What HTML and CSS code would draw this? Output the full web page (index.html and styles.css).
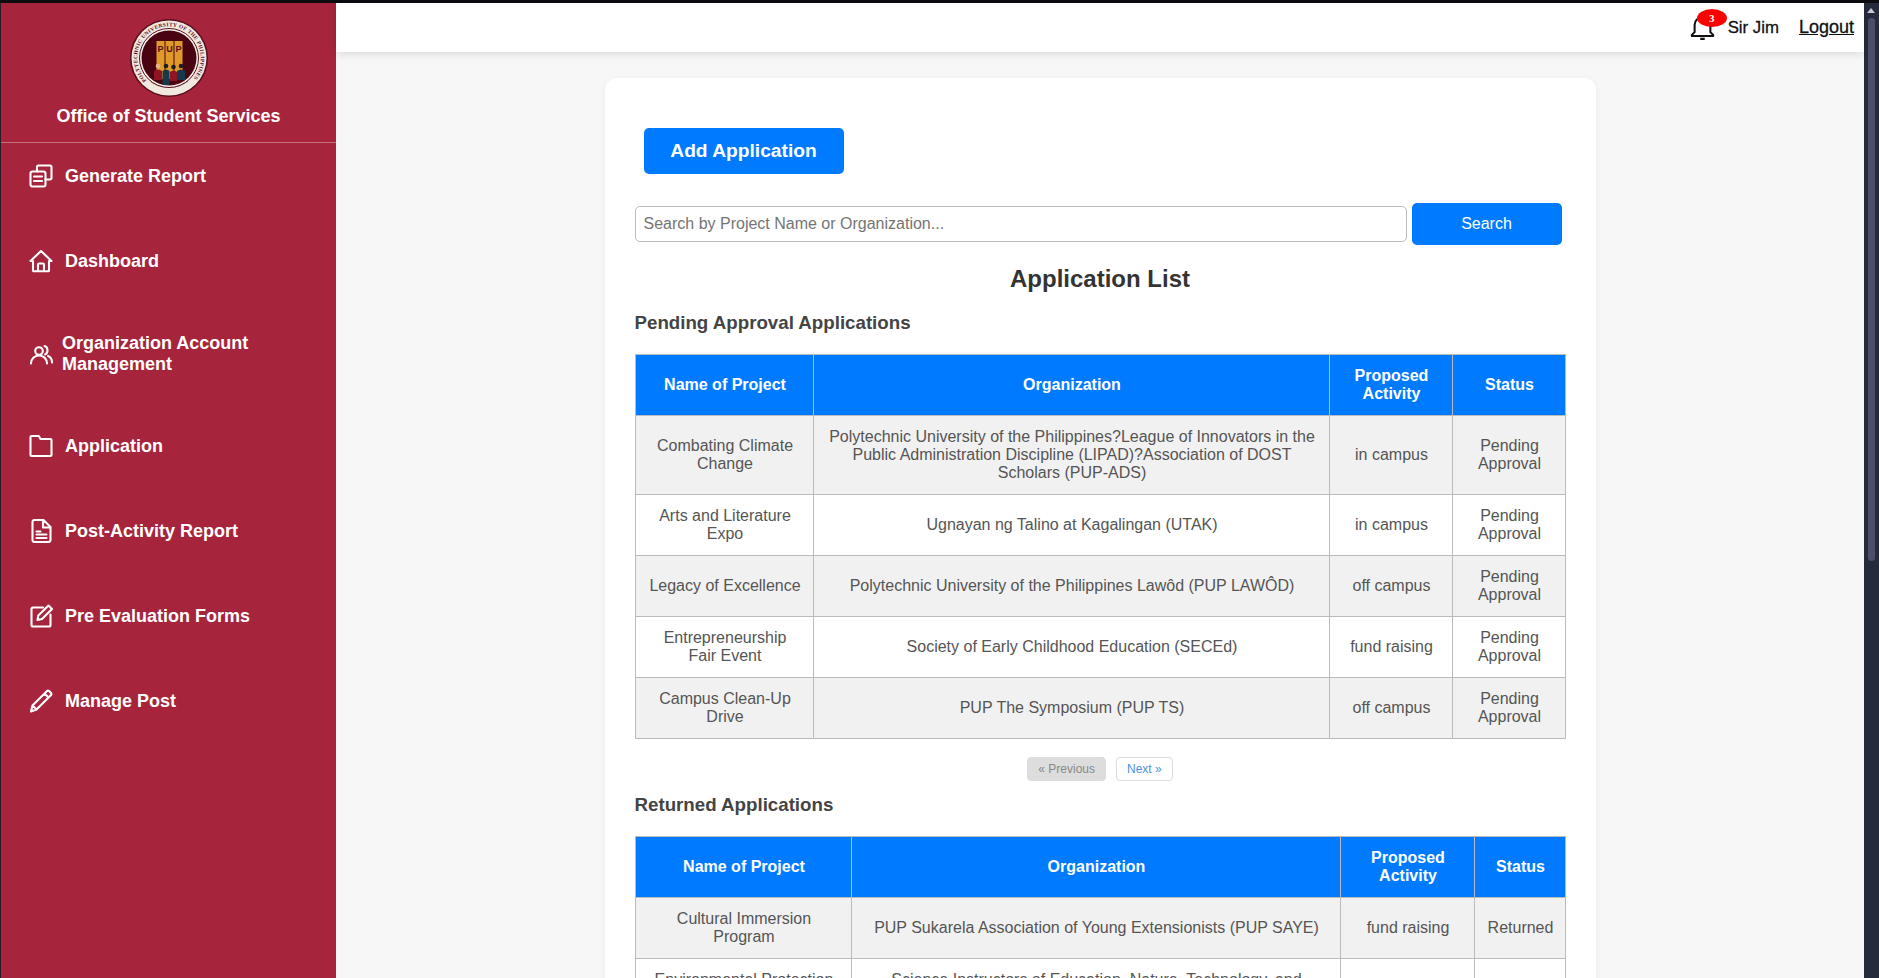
FILE: index.html
```html
<!DOCTYPE html>
<html lang="en">
<head>
<meta charset="utf-8">
<title>Application List</title>
<link rel="stylesheet" href="styles.css">
</head>
<body>
<div class="topline"></div>
<div class="frame">
  <aside class="sidebar">
    <div class="brand">
      <svg class="logo" viewBox="0 0 80 80" aria-hidden="true">
        <defs><path id="ring" d="M17.500 62.500A31.800 31.800 0 1 1 62.500 62.500"/><path id="ringb" d="M20 63a32 32 0 0 0 40 0"/></defs>
        <circle cx="40" cy="40" r="39" fill="#5a0c1c"/>
        <circle cx="40" cy="40" r="37.500" fill="#f1e8e0"/>
        <text class="logo-ring"><textPath href="#ring" textLength="146">POLYTECHNIC UNIVERSITY OF THE PHILIPPINES</textPath></text>
        <text class="logo-ring-b"><textPath href="#ringb" textLength="40" startOffset="2">OFFICE OF STUDENT SERVICES</textPath></text>
        <circle cx="40" cy="40" r="29.500" fill="#f7f1ec" stroke="#5a0c1c" stroke-width="1"/>
        <circle cx="40" cy="40" r="27.500" fill="#4a0310"/>
        <rect x="27.500" y="23" width="8" height="38" fill="#e09a2b"/>
        <rect x="36.500" y="23" width="8" height="38" fill="#e09a2b"/>
        <rect x="45.500" y="23" width="8" height="38" fill="#e09a2b"/>
        <text class="logo-pup" x="31.500" y="34">P</text>
        <text class="logo-pup" x="40.500" y="34">U</text>
        <text class="logo-pup" x="49.500" y="34">P</text>
        <g>
          <circle cx="29" cy="48" r="2.300" fill="#e8b58f"/><path d="M25 62V53q4-3 8 0v9z" fill="#8f1524"/>
          <circle cx="37" cy="48" r="2.300" fill="#1d1d24"/><path d="M33.500 67V53q3.500-3 7 0v14z" fill="#173a4a"/>
          <circle cx="44.500" cy="49" r="2.300" fill="#1d1d24"/><path d="M41 63V54q3.500-3 7 0v9z" fill="#8f1524"/>
          <circle cx="52" cy="48" r="2.300" fill="#1d1d24"/><path d="M48 62V53q4-3 8 0v9z" fill="#173a4a"/>
        </g>
      </svg>
      <div class="brand-name">Office of Student Services</div>
    </div>
    <nav class="nav">
      <a class="nav-item">
        <svg class="nav-icon" viewBox="0 0 24 24"><rect x="1.500" y="7.500" width="15" height="15" rx="2"/><path d="M8 7.500V3a1.500 1.500 0 0 1 1.500-1.500H21A1.500 1.500 0 0 1 22.500 3v11a1.500 1.500 0 0 1-1.500 1.500h-4.500M5 12.500h8M5 17h8"/></svg>
        <span>Generate Report</span>
      </a>
      <a class="nav-item">
        <svg class="nav-icon" viewBox="0 0 24 24"><path d="M1.500 12 12 2l10.500 10H20v9.500a.8.8 0 0 1-.8.8H4.800a.8.8 0 0 1-.8-.8V12zM9 22v-6.500a1 1 0 0 1 1-1h4a1 1 0 0 1 1 1V22"/></svg>
        <span>Dashboard</span>
      </a>
      <a class="nav-item nav-item-tight">
        <svg class="nav-icon" viewBox="0 0 24 24"><circle cx="10" cy="9" r="3.800"/><path d="M2 21.500c0-4.500 3.500-8 8-8s8 3.500 8 8M15.500 4c2.200.5 3 2.500 3 4.500s-1 3.300-2.300 4M19 14c2.500 1 4 3.500 4 6.500"/></svg>
        <span>Organization Account Management</span>
      </a>
      <a class="nav-item">
        <svg class="nav-icon" viewBox="0 0 24 24"><path d="M1.500 3a1 1 0 0 1 1-1h7.300l1.700 3h10a1 1 0 0 1 1 1v15a1 1 0 0 1-1 1h-19a1 1 0 0 1-1-1z"/></svg>
        <span>Application</span>
      </a>
      <a class="nav-item">
        <svg class="nav-icon" viewBox="0 0 24 24"><path d="M3.500 3a2 2 0 0 1 2-2h9L21.500 8v13a2 2 0 0 1-2 2h-14a2 2 0 0 1-2-2zM14 1.500V8.500h7M7.500 12.500h4M7.500 15.500h10M7.500 19h10"/></svg>
        <span>Post-Activity Report</span>
      </a>
      <a class="nav-item">
        <svg class="nav-icon" viewBox="0 0 24 24"><path d="M14 3.500H4a1.500 1.500 0 0 0-1.500 1.500v16A1.500 1.500 0 0 0 4 22.500h16a1.500 1.500 0 0 0 1.500-1.500V10.500M8.500 16l.8-4.500L19.500 1.500l3.500 3.500-10 10z"/></svg>
        <span>Pre Evaluation Forms</span>
      </a>
      <a class="nav-item">
        <svg class="nav-icon" viewBox="0 0 24 24"><path d="M2 22.500l1.500-6L17.800 2.200a1.800 1.800 0 0 1 2.500 0l1.500 1.500a1.800 1.800 0 0 1 0 2.500L7.500 20.500zM3.500 16.500l4 4M15.500 4.500l4 4"/></svg>
        <span>Manage Post</span>
      </a>
    </nav>
  </aside>
  <div class="main">
    <header class="topbar">
      <div class="bell">
        <svg class="bell-icon" viewBox="0 0 24 24"><path d="M5 17V10.500C5 6.500 8 4 12 4s7 2.500 7 6.500V17l2.500 2.500v1h-19v-1zM10 23h4"/></svg>
        <span class="badge">3</span>
      </div>
      <span class="user">Sir Jim</span>
      <a class="logout">Logout</a>
    </header>
    <div class="content">
      <section class="card">
        <button class="add-btn">Add Application</button>
        <div class="search">
          <input class="search-input" type="text" placeholder="Search by Project Name or Organization...">
          <button class="search-btn">Search</button>
        </div>
        <h2 class="list-title">Application List</h2>
        <h3 class="sec-title">Pending Approval Applications</h3>
        <table class="apps">
          <colgroup><col class="c1a"><col class="c2a"><col class="c3a"><col class="c4a"></colgroup>
          <thead><tr><th>Name of Project</th><th>Organization</th><th>Proposed Activity</th><th>Status</th></tr></thead>
          <tbody>
            <tr><td>Combating Climate Change</td><td>Polytechnic University of the Philippines?League of Innovators in the Public Administration Discipline (LIPAD)?Association of DOST Scholars (PUP-ADS)</td><td>in campus</td><td>Pending Approval</td></tr>
            <tr><td>Arts and Literature Expo</td><td>Ugnayan ng Talino at Kagalingan (UTAK)</td><td>in campus</td><td>Pending Approval</td></tr>
            <tr><td>Legacy of Excellence</td><td>Polytechnic University of the Philippines Lawôd (PUP LAWÔD)</td><td>off campus</td><td>Pending Approval</td></tr>
            <tr><td>Entrepreneurship Fair Event</td><td>Society of Early Childhood Education (SECEd)</td><td>fund raising</td><td>Pending Approval</td></tr>
            <tr><td>Campus Clean-Up Drive</td><td>PUP The Symposium (PUP TS)</td><td>off campus</td><td>Pending Approval</td></tr>
          </tbody>
        </table>
        <div class="pager"><a class="page-btn page-off">« Previous</a><a class="page-btn page-on">Next »</a></div>
        <h3 class="sec-title sec-returned">Returned Applications</h3>
        <table class="apps">
          <colgroup><col class="c1b"><col class="c2b"><col class="c3b"><col class="c4b"></colgroup>
          <thead><tr><th>Name of Project</th><th>Organization</th><th>Proposed Activity</th><th>Status</th></tr></thead>
          <tbody>
            <tr><td>Cultural Immersion Program</td><td>PUP Sukarela Association of Young Extensionists (PUP SAYE)</td><td>fund raising</td><td>Returned</td></tr>
            <tr><td>Environmental Protection Campaign</td><td>Science Instructors of Education, Nature, Technology, and Society (SINETS)</td><td>in campus</td><td>Returned</td></tr>
          </tbody>
        </table>
      </section>
    </div>
  </div>
  <div class="scrollbar">
    <span class="scroll-arrow"></span>
    <span class="scroll-thumb"></span>
  </div>
</div>
</body>
</html>
```
FILE: styles.css
```css
* { box-sizing: border-box; }
html, body { margin: 0; height: 100%; overflow: hidden; }
body { display: flex; flex-direction: column; font-family: "Liberation Sans", Arial, sans-serif; background: #f7f7f7; color: #444; }
.topline { height: 3px; flex: none; background: #0b0b10; }
.frame { flex: 1; min-height: 0; display: flex; }

.sidebar { flex: none; width: 336px; border-left: 1px solid #2c1a26; background: #a6253c; color: #fff; }
.brand { height: 140px; display: flex; flex-direction: column; align-items: center; border-bottom: 1px solid #c4707f; padding-top: 15px; }
.logo { width: 80px; height: 80px; flex: none; }
.logo-ring { font: bold 5.400px "Liberation Serif", serif; fill: #5a0c1c; }
.logo-ring-b { font: bold 2.400px "Liberation Serif", serif; fill: #5a0c1c; }
.logo-pup { font: bold 9px "Liberation Sans", sans-serif; fill: #5a0c1c; text-anchor: middle; }
.brand-name { margin-top: 8px; font-size: 18px; font-weight: bold; line-height: 21px; }
.nav { display: flex; flex-direction: column; gap: 59px; padding: 20px 30px 0 28px; }
.nav-item { display: flex; align-items: center; gap: 12px; min-height: 26px; font-size: 18px; font-weight: bold; line-height: 20.500px; color: #fff; }
.nav-icon { width: 24px; height: 24px; flex: none; fill: none; stroke: #fff; stroke-width: 2.100; stroke-linejoin: round; stroke-linecap: round; }
.nav-item-tight { gap: 9px; padding-right: 30px; }

.main { flex: 1; min-width: 0; display: flex; flex-direction: column; }
.topbar { flex: none; height: 49px; background: #fff; box-shadow: 0 2px 8px rgba(0, 0, 0, .12); display: flex; align-items: center; justify-content: flex-end; padding: 0 10px 0 0; position: relative; z-index: 1; color: #111; }
.bell { position: relative; width: 27px; height: 27px; margin-right: 12px; margin-bottom: 3px; }
.bell-icon { width: 27px; height: 27px; display: block; fill: none; stroke: #111; stroke-width: 1.800; stroke-linejoin: round; }
.badge { position: absolute; top: -4px; left: 8px; width: 30px; height: 18px; border-radius: 50%; background: #f00; color: #fff; font: bold 11px/18px "Liberation Serif", serif; text-align: center; }
.user { margin-right: 20px; font-size: 16.800px; -webkit-text-stroke: .3px #111; }
.logout { font-size: 18px; text-decoration: underline; -webkit-text-stroke: .3px #111; }

.content { flex: 1; min-height: 0; overflow: hidden; display: flex; justify-content: center; padding: 26px 0 0 0; }
.card { flex: none; width: 991px; padding: 50px 30px 0; background: #fff; border-radius: 12px; box-shadow: 0 2px 8px rgba(0, 0, 0, .05); height: 1200px; }
button { font-family: inherit; cursor: pointer; border: 0; color: #fff; background: #007bff; }
.add-btn { display: block; margin-left: 9px; width: 200px; height: 46px; border-radius: 5px; font-size: 19.200px; font-weight: bold; }
.search { display: flex; gap: 5px; margin-top: 32px; }
.search-input { width: 772px; height: 36px; padding: 0 8px; border: 1px solid #bbb; border-radius: 5px; font: 16px "Liberation Sans", sans-serif; background: #fff; }
.search-input::placeholder { color: #757575; }
.search-btn { width: 150px; height: 42px; margin-top: -3px; border-radius: 5px; font-size: 16px; }
.list-title { margin: 20px 0 0; font-size: 24px; line-height: 28px; font-weight: bold; color: #333; text-align: center; }
.sec-title { margin: 19px 0 0; font-size: 18.720px; line-height: 22px; font-weight: bold; color: #444; }
.apps { width: 930px; margin-top: 20px; border-collapse: collapse; table-layout: fixed; font-size: 16px; text-align: center; }
.apps th, .apps td { padding: 12px 11px 12px 13px; border: 1px solid #bbb; line-height: 18px; }
.apps th { background: #007bff; color: #fff; font-weight: bold; }
.apps td { color: #555; background: #fff; }
.apps tbody tr:nth-child(odd) td { background: #f1f1f1; }
.c1a { width: 178px; } .c2a { width: 516px; } .c3a { width: 123px; } .c4a { width: 113px; }
.c1b { width: 216px; } .c2b { width: 489px; } .c3b { width: 134px; } .c4b { width: 91px; }
.pager { display: flex; justify-content: center; gap: 10px; margin-top: 18px; }
.page-btn { height: 24px; padding: 0 10px; border-radius: 4px; font-size: 12px; line-height: 22px; border: 1px solid #ddd; }
.page-off { background: #ddd; color: #888; }
.page-on { background: #fff; color: #4a90e2; }
.sec-returned { margin-top: 13px; }

.scrollbar { flex: none; width: 15px; background: #262b3b; position: relative; }
.scroll-arrow { position: absolute; top: 5px; left: 3px; width: 0; height: 0; border: 4px solid transparent; border-top: 0; border-bottom: 5px solid #c8c8d0; }
.scroll-thumb { position: absolute; top: 15px; left: 4px; width: 7px; height: 543px; border-radius: 4px; background: #4d4f6a; }
```
